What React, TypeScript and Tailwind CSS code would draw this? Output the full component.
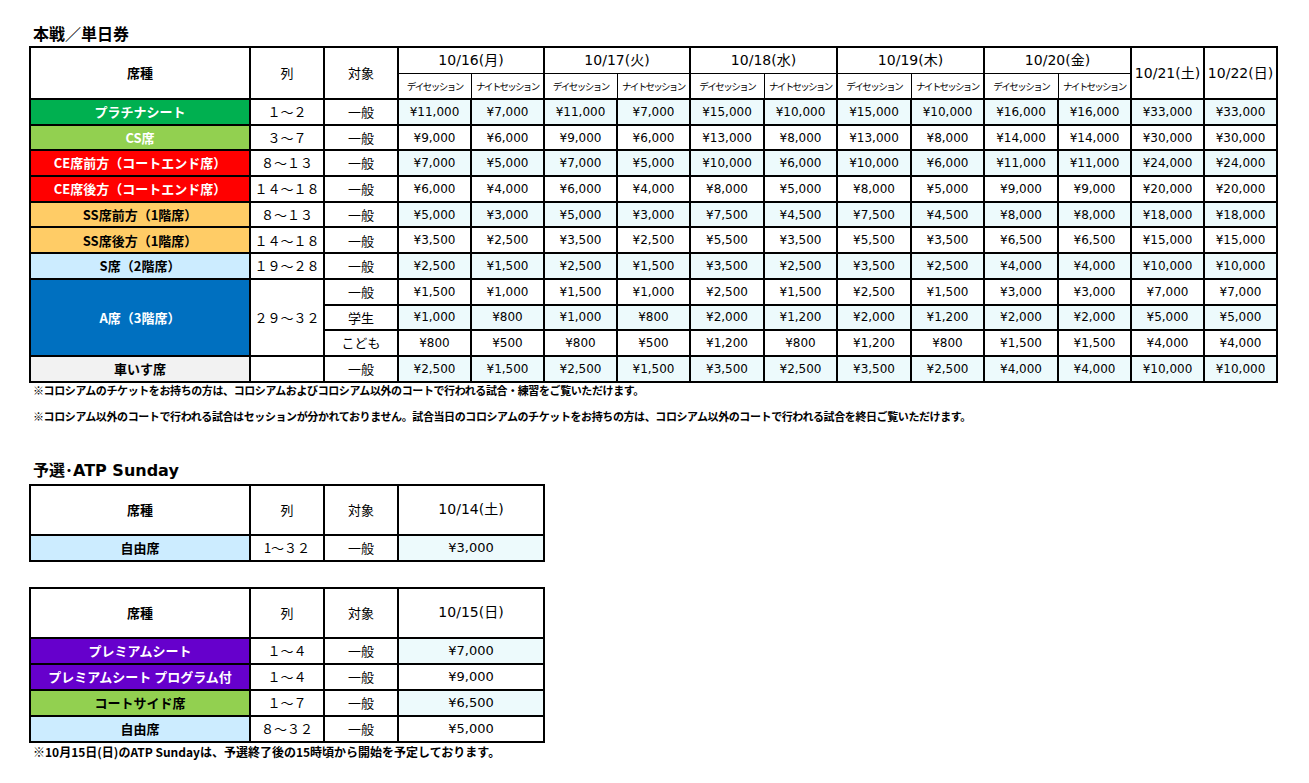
import React from "react";

const jp = "font-['Noto_Sans_CJK_JP',sans-serif]";
const num = "font-['DejaVu_Sans','Noto_Sans_CJK_JP',sans-serif]";
const tint = "bg-[#edfafc]";

type Row = {
  label?: string;
  labelBg?: string;
  labelText?: string;
  labelSpan?: number;
  range?: string;
  rangeSpan?: number;
  target: string;
  prices: number[];
};

const rows: Row[] = [
  { label: "プラチナシート", labelBg: "bg-[#00b050]", labelText: "text-white", range: "１～２", target: "一般", prices: [11000, 7000, 11000, 7000, 15000, 10000, 15000, 10000, 16000, 16000, 33000, 33000] },
  { label: "CS席", labelBg: "bg-[#92d050]", labelText: "text-white", range: "３～７", target: "一般", prices: [9000, 6000, 9000, 6000, 13000, 8000, 13000, 8000, 14000, 14000, 30000, 30000] },
  { label: "CE席前方（コートエンド席）", labelBg: "bg-[#ff0000]", labelText: "text-white", range: "８～１３", target: "一般", prices: [7000, 5000, 7000, 5000, 10000, 6000, 10000, 6000, 11000, 11000, 24000, 24000] },
  { label: "CE席後方（コートエンド席）", labelBg: "bg-[#ff0000]", labelText: "text-white", range: "１４～１８", target: "一般", prices: [6000, 4000, 6000, 4000, 8000, 5000, 8000, 5000, 9000, 9000, 20000, 20000] },
  { label: "SS席前方（1階席）", labelBg: "bg-[#ffcc66]", labelText: "text-black", range: "８～１３", target: "一般", prices: [5000, 3000, 5000, 3000, 7500, 4500, 7500, 4500, 8000, 8000, 18000, 18000] },
  { label: "SS席後方（1階席）", labelBg: "bg-[#ffcc66]", labelText: "text-black", range: "１４～１８", target: "一般", prices: [3500, 2500, 3500, 2500, 5500, 3500, 5500, 3500, 6500, 6500, 15000, 15000] },
  { label: "S席（2階席）", labelBg: "bg-[#ccecff]", labelText: "text-black", range: "１９～２８", target: "一般", prices: [2500, 1500, 2500, 1500, 3500, 2500, 3500, 2500, 4000, 4000, 10000, 10000] },
  { label: "A席（3階席）", labelBg: "bg-[#0070c0]", labelText: "text-white", labelSpan: 3, range: "２９～３２", rangeSpan: 3, target: "一般", prices: [1500, 1000, 1500, 1000, 2500, 1500, 2500, 1500, 3000, 3000, 7000, 7000] },
  { target: "学生", prices: [1000, 800, 1000, 800, 2000, 1200, 2000, 1200, 2000, 2000, 5000, 5000] },
  { target: "こども", prices: [800, 500, 800, 500, 1200, 800, 1200, 800, 1500, 1500, 4000, 4000] },
  { label: "車いす席", labelBg: "bg-[#f2f2f2]", labelText: "text-black", range: "", target: "一般", prices: [2500, 1500, 2500, 1500, 3500, 2500, 3500, 2500, 4000, 4000, 10000, 10000] },
];

const days = ["10/16(月)", "10/17(火)", "10/18(水)", "10/19(木)", "10/20(金)"];
const priceCols = [73, 73, 73, 73, 74, 73, 74, 73, 74, 73, 73, 73];

const yen = (n: number) => "¥" + n.toLocaleString("en-US");

const cell = "border-2 border-black text-center p-0";

function MainTable() {
  return (
    <table className="table-fixed border-collapse border-2 border-black text-black">
      <colgroup>
        <col className="w-[220px]" />
        <col className="w-[74px]" />
        <col className="w-[74px]" />
        {priceCols.map((w, i) => (
          <col key={i} style={{ width: w }} />
        ))}
      </colgroup>
      <thead>
        <tr className="h-[26px]">
          <th rowSpan={2} className={`${cell} ${jp} text-[13px] font-bold`}>席種</th>
          <th rowSpan={2} className={`${cell} ${jp} text-[13px] font-normal`}>列</th>
          <th rowSpan={2} className={`${cell} ${jp} text-[13px] font-normal`}>対象</th>
          {days.map((d) => (
            <th key={d} colSpan={2} className={`border-2 border-b border-black p-0 text-center ${num} text-[14px] font-normal`}>
              {d}
            </th>
          ))}
          <th rowSpan={2} className={`${cell} ${num} text-[14px] font-normal whitespace-nowrap`}>10/21(土)</th>
          <th rowSpan={2} className={`${cell} ${num} text-[14px] font-normal whitespace-nowrap`}>10/22(日)</th>
        </tr>
        <tr className="h-[26px]">
          {days.map((d) => (
            <React.Fragment key={d}>
              <th className={`border border-l-2 border-b-2 border-black p-0 text-center ${jp} text-[9.5px] font-normal tracking-[-1.5px] whitespace-nowrap`}>
                デイセッション
              </th>
              <th className={`border border-r-2 border-b-2 border-black p-0 text-center ${jp} text-[9.5px] font-normal tracking-[-1.7px] whitespace-nowrap`}>
                ナイトセッション
              </th>
            </React.Fragment>
          ))}
        </tr>
      </thead>
      <tbody>
        {rows.map((r, i) => (
          <tr key={i} className="h-[25.7px]">
            {r.label !== undefined && (
              <td rowSpan={r.labelSpan ?? 1} className={`${cell} ${r.labelBg} ${r.labelText} ${jp} text-[13px] font-bold whitespace-nowrap`}>
                {r.label}
              </td>
            )}
            {r.range !== undefined && (
              <td rowSpan={r.rangeSpan ?? 1} className={`${cell} bg-white ${jp} text-[13px]`}>
                {r.range}
              </td>
            )}
            <td className={`${cell} bg-white ${jp} text-[13px]`}>{r.target}</td>
            {r.prices.map((p, j) => (
              <td key={j} className={`${cell} ${i % 2 === 0 ? tint : "bg-white"} ${num} text-[12px]`}>
                {yen(p)}
              </td>
            ))}
          </tr>
        ))}
      </tbody>
    </table>
  );
}

type SmallRow = { label: string; bg: string; text: string; range: string; price: number };

function SmallTable({ day, data }: { day: string; data: SmallRow[] }) {
  return (
    <table className="table-fixed border-collapse border-2 border-black text-black">
      <colgroup>
        <col className="w-[220px]" />
        <col className="w-[74px]" />
        <col className="w-[74px]" />
        <col className="w-[146px]" />
      </colgroup>
      <thead>
        <tr className="h-[50px]">
          <th className={`${cell} ${jp} text-[13px] font-bold`}>席種</th>
          <th className={`${cell} ${jp} text-[13px] font-normal`}>列</th>
          <th className={`${cell} ${jp} text-[13px] font-normal`}>対象</th>
          <th className={`${cell} ${num} text-[14px] font-normal`}>{day}</th>
        </tr>
      </thead>
      <tbody>
        {data.map((r, i) => (
          <tr key={i} className="h-[26px]">
            <td className={`${cell} ${r.bg} ${r.text} ${jp} text-[13px] font-bold whitespace-nowrap`}>{r.label}</td>
            <td className={`${cell} bg-white ${jp} text-[13px]`}>{r.range}</td>
            <td className={`${cell} bg-white ${jp} text-[13px]`}>一般</td>
            <td className={`${cell} ${i % 2 === 0 ? tint : "bg-white"} ${num} text-[13px]`}>{yen(r.price)}</td>
          </tr>
        ))}
      </tbody>
    </table>
  );
}

export default function App() {
  return (
    <div className={`w-[1309px] h-[783px] bg-white pl-[29px] pt-[23px] ${jp} text-black`}>
      <h2 className="pl-1 text-[16px] font-bold leading-[20px] mb-[3px]">本戦／単日券</h2>
      <MainTable />
      <p className="pl-1 text-[11px] font-bold leading-[16px] tracking-[-0.4px] -mt-[1px]">
        ※コロシアムのチケットをお持ちの方は、コロシアムおよびコロシアム以外のコートで行われる試合・練習をご覧いただけます。
      </p>
      <p className="pl-1 text-[11px] font-bold leading-[16px] tracking-[-0.4px] mt-[10px]">
        ※コロシアム以外のコートで行われる試合はセッションが分かれておりません。試合当日のコロシアムのチケットをお持ちの方は、コロシアム以外のコートで行われる試合を終日ご覧いただけます。
      </p>

      <h2 className={`pl-1 ${num} text-[16px] font-bold leading-[20px] mt-[37px] mb-[3px]`}>予選･ATP Sunday</h2>
      <SmallTable
        day="10/14(土)"
        data={[{ label: "自由席", bg: "bg-[#ccecff]", text: "text-black", range: "1～３２", price: 3000 }]}
      />

      <div className="h-[25px]" />
      <SmallTable
        day="10/15(日)"
        data={[
          { label: "プレミアムシート", bg: "bg-[#6600cc]", text: "text-white", range: "１～４", price: 7000 },
          { label: "プレミアムシート プログラム付", bg: "bg-[#6600cc]", text: "text-white", range: "１～４", price: 9000 },
          { label: "コートサイド席", bg: "bg-[#92d050]", text: "text-black", range: "１～７", price: 6500 },
          { label: "自由席", bg: "bg-[#ccecff]", text: "text-black", range: "８～３２", price: 5000 },
        ]}
      />
      <p className="pl-1 text-[12px] font-bold leading-[14px] mt-[2px]">
        ※10月15日(日)のATP Sundayは、予選終了後の15時頃から開始を予定しております。
      </p>
    </div>
  );
}
